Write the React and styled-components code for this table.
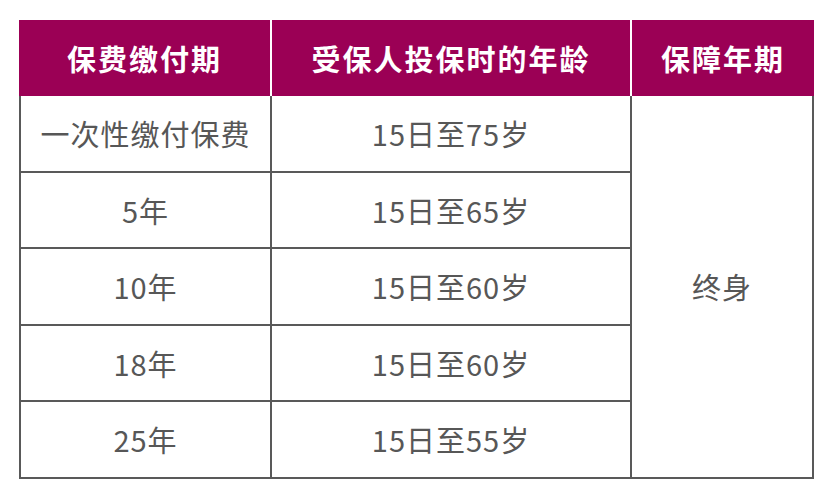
import React from "react";
import styled, { createGlobalStyle } from "styled-components";

const GlobalStyle = createGlobalStyle`
  body {
    margin: 0;
    background: #ffffff;
    font-family: "Noto Sans CJK SC", "Noto Sans", sans-serif;
  }
`;

const Page = styled.div`
  padding: 20px 0 0 19px;
`;

const Table = styled.table`
  width: 795px;
  border-collapse: separate;
  border-spacing: 0;
  table-layout: fixed;
`;

const HeadCell = styled.th`
  height: 76px;
  padding: 0;
  background: #9b0055;
  color: #ffffff;
  font-size: 29px;
  font-weight: 700;
  letter-spacing: 2px;
  text-align: center;
  vertical-align: middle;
  border-right: ${(p) => (p.$last ? "none" : "2px solid #ffffff")};
`;

const Cell = styled.td`
  height: 74.5px;
  padding: 0;
  color: #575757;
  font-size: 29px;
  font-weight: 400;
  letter-spacing: 1px;
  text-align: center;
  vertical-align: middle;
  border-right: 2px solid #595959;
  border-bottom: 2px solid #595959;
  border-left: ${(p) => (p.$first ? "2px solid #595959" : "none")};
`;

const rows = [
  { term: "一次性缴付保费", age: "15日至75岁" },
  { term: "5年", age: "15日至65岁" },
  { term: "10年", age: "15日至60岁" },
  { term: "18年", age: "15日至60岁" },
  { term: "25年", age: "15日至55岁" },
];

export default function App() {
  return (
    <Page>
      <GlobalStyle />
      <Table>
        <colgroup>
          <col style={{ width: 253 }} />
          <col style={{ width: 360 }} />
          <col style={{ width: 182 }} />
        </colgroup>
        <thead>
          <tr>
            <HeadCell>保费缴付期</HeadCell>
            <HeadCell>受保人投保时的年龄</HeadCell>
            <HeadCell $last>保障年期</HeadCell>
          </tr>
        </thead>
        <tbody>
          {rows.map((r, i) => (
            <tr key={i}>
              <Cell $first>{r.term}</Cell>
              <Cell>{r.age}</Cell>
              {i === 0 && <Cell rowSpan={rows.length}>终身</Cell>}
            </tr>
          ))}
        </tbody>
      </Table>
    </Page>
  );
}
